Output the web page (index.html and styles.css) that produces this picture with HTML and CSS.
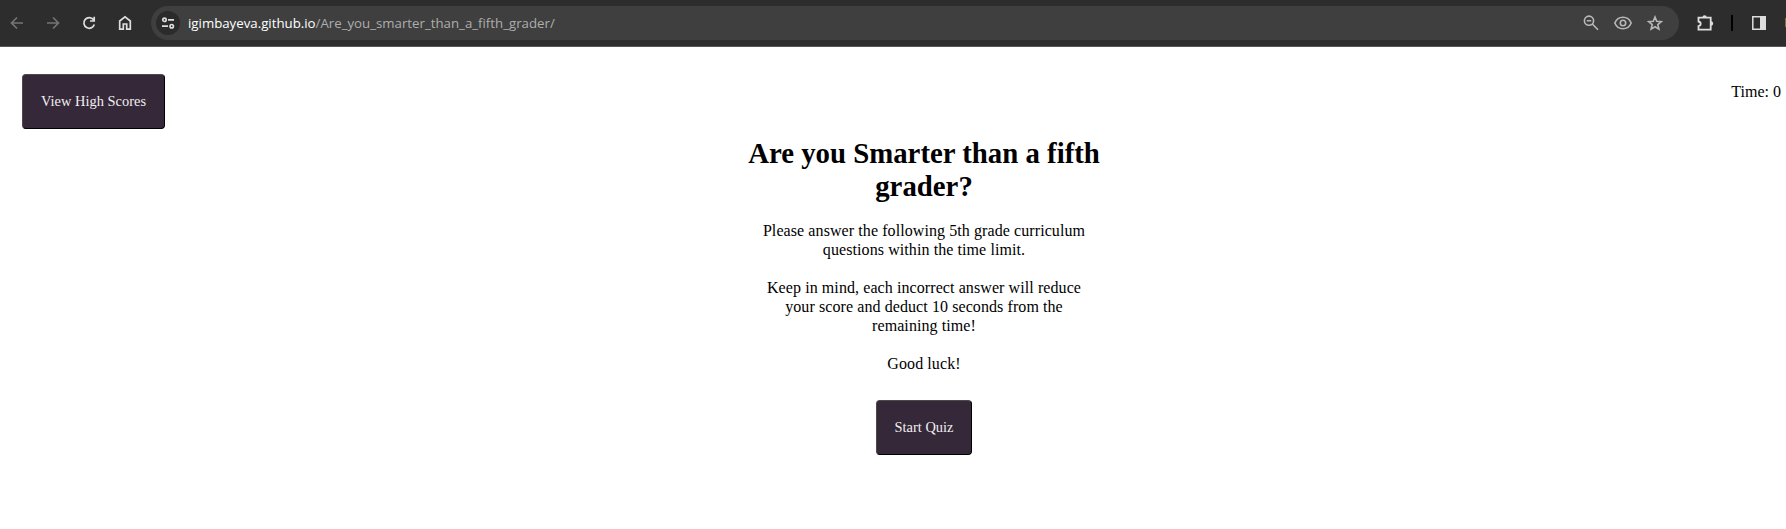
FILE: index.html
```html
<!DOCTYPE html>
<html lang="en">
<head>
<meta charset="utf-8">
<title>Are you Smarter than a fifth grader?</title>
<link rel="stylesheet" href="styles.css">
</head>
<body>
<div class="toolbar">
  <nav class="nav-icons">
    <svg class="icon dim" viewBox="0 0 16 16"><path d="M14 8H3M8 2.5 2.5 8 8 13.5"/></svg>
    <svg class="icon dim" viewBox="0 0 16 16"><path d="M2 8h11M8 2.5 13.500 8 8 13.500"/></svg>
    <svg class="icon" viewBox="0 0 16 16"><path d="M12.500 4.800A5.300 5.300 0 1 0 13.300 9.500M13.200 1.700V6H9"/></svg>
    <svg class="icon" viewBox="0 0 16 16"><path d="M2.700 6 8 1.900 13.300 6v8.200H9.700V9H6.300v5.200H2.700z"/></svg>
  </nav>
  <div class="address">
    <span class="site"><svg class="icon" viewBox="0 0 16 16"><circle cx="4.500" cy="4.800" r="1.700"/><path d="M8 4.800h6M2 11.200h6"/><circle cx="11.700" cy="11.200" r="1.700"/></svg></span>
    <span class="url"><span class="host">igimbayeva.github.io</span><span class="path">/Are_you_smarter_than_a_fifth_grader/</span></span>
    <span class="actions">
      <svg class="icon" viewBox="0 0 16 16"><circle cx="6" cy="5.700" r="4.600"/><path d="M3.800 5.700h4.400M9.300 9l5.700 5.700"/></svg>
      <svg class="icon wide" viewBox="0 0 18 16"><path d="M.8 8C4 .4 14 .4 17.200 8 14 15.600 4 15.600.8 8z"/><circle cx="9" cy="8" r="2.700"/></svg>
      <svg class="icon" viewBox="0 0 16 16"><path d="m8 2 1.700 4.200 4.600.4-3.500 3 1.100 4.500L8 11.700l-3.900 2.400 1.100-4.500-3.500-3 4.600-.4z"/></svg>
    </span>
  </div>
  <svg class="puzzle" viewBox="0 0 18 18"><path d="M2.500 3.600h12.200v12H2.500v-3.500c2.900-.5 2.900-4.100 0-4.600z"/><path class="fill" d="M6.400 3.400a2.200 2.200 0 0 1 4.400 0zM15 7.300a2.200 2.200 0 0 1 0 4.400z"/></svg>
  <span class="divider"></span>
  <svg class="panel" viewBox="0 0 16 16"><path d="M1.800 1.800h12.400v12.400H1.800z"/><path class="fill" d="M9 1.300h5.700v13.400H9z"/></svg>
  <span class="avatar"></span>
</div>
<header class="page-head">
  <button class="btn scores"><span>View High Scores</span></button>
  <div class="timer">Time: 0</div>
</header>
<main class="quiz">
  <h1>Are you Smarter than a fifth<br>grader?</h1>
  <p>Please answer the following 5th grade curriculum<br>questions within the time limit.</p>
  <p>Keep in mind, each incorrect answer will reduce<br>your score and deduct 10 seconds from the<br>remaining time!</p>
  <p>Good luck!</p>
  <button class="btn start"><span>Start Quiz</span></button>
</main>
</body>
</html>
```
FILE: styles.css
```css
* { box-sizing: border-box; }
body { margin: 0; height: 529px; overflow: hidden; background: #fff; color: #000; font-family: "Liberation Serif", serif; font-size: 16px; }
.toolbar { display: flex; align-items: center; height: 47px; padding: 0 0 1px 9px; background: #2d2d2d; border-bottom: 1px solid #575757; }
.nav-icons { display: flex; gap: 20px; width: 142px; }
.icon { width: 16px; height: 16px; flex: none; fill: none; stroke: #dedede; stroke-width: 1.7; }
.dim { stroke: #747474; }
.wide { width: 18px; }
.address { display: flex; align-items: center; width: 1528px; height: 34px; padding: 0 16px 0 5px; background: #3f3f3f; border-radius: 17px; }
.site { display: flex; align-items: center; justify-content: center; width: 24px; height: 24px; border-radius: 50%; background: #2b2b2b; }
.url { margin-left: 8px; font: 13.25px/18px "Open Sans", sans-serif; white-space: nowrap; }
.host { color: #fff; }
.path { color: #adadad; }
.actions { display: flex; gap: 15px; margin-left: auto; }
.actions .icon { stroke: #b8b8b8; stroke-width: 1.6; }
.puzzle { width: 18px; height: 18px; margin-left: 17px; fill: none; stroke: #dedede; stroke-width: 1.8; }
.fill { fill: #dedede; stroke: none; }
.divider { width: 2px; height: 16px; margin-left: 17px; background: #000; }
.panel { width: 16px; height: 16px; margin-left: 18px; fill: none; stroke: #dedede; stroke-width: 1.5; }
.avatar { width: 1px; height: 9px; margin-left: auto; background: #8b6c3f; }
.page-head { display: flex; justify-content: space-between; padding: 27px 5px 0 22px; }
.btn { display: block; height: 55px; padding: 0; border: 1px outset #000; border-color: #4a4a4a #000 #000 #4a4a4a; border-radius: 4px; background: #352838; color: #f1eff1; font: 14.4px/17px "Liberation Serif", serif; white-space: nowrap; }
.scores { width: 143px; letter-spacing: .03px; }
.timer { padding-top: 8px; line-height: 19px; }
.quiz { width: 360px; margin: 8px 0 0 744px; text-align: center; }
h1 { margin: 0; font-size: 28.8px; line-height: 33px; white-space: nowrap; }
p { margin: 0 0 19px; line-height: 19px; letter-spacing: .085px; white-space: nowrap; }
h1 + p { margin-top: 18px; }
.start { width: 96px; margin: 27px auto 0; }
```
